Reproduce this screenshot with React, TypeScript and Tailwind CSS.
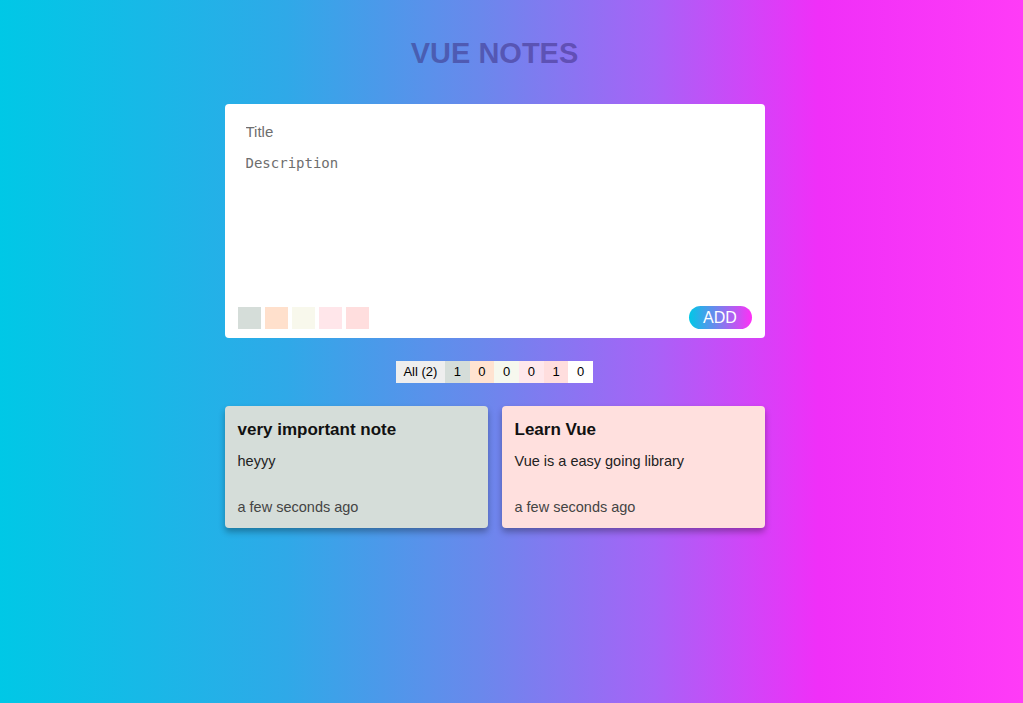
import { useState } from "react";

const colors = ["#d5ddd9", "#ffe0cc", "#f8f8ec", "#ffe6ea", "#ffdede"];

const notes = [
  { title: "very important note", body: "heyyy", color: "#d5ddd9" },
  { title: "Learn Vue", body: "Vue is a easy going library", color: "#ffe0de" },
];

const counts = [
  { label: "1", bg: "bg-[#d5ddd9]" },
  { label: "0", bg: "bg-[#ffe3d1]" },
  { label: "0", bg: "bg-[#f6f8ee]" },
  { label: "0", bg: "bg-[#ffe8ec]" },
  { label: "1", bg: "bg-[#ffdede]" },
  { label: "0", bg: "bg-white" },
];

export default function App() {
  const [title, setTitle] = useState("");
  const [desc, setDesc] = useState("");

  return (
    <main
      className="min-h-[703px] w-full pr-[34px] bg-[linear-gradient(to_right,#00c8e6_0%,#2fa9e8_28%,#6a88ec_47%,#a862f7_64%,#f02ff8_80%,#ff3bf7_100%)] font-['Liberation_Sans',Arial,sans-serif]"
    >
      <h1 className="pt-[35px] text-center text-[29px] font-bold leading-9 text-[#3a2a7a]/50">
        VUE NOTES
      </h1>

      <div className="mx-auto mt-[33px] w-[540px]">
        <div className="flex h-[234px] flex-col rounded bg-white">
          <input
            value={title}
            onChange={(e) => setTitle(e.target.value)}
            placeholder="Title"
            className="mx-[21px] mt-[16px] text-[15px] leading-6 text-gray-800 outline-none placeholder:text-[#6e6e6e]"
          />
          <textarea
            value={desc}
            onChange={(e) => setDesc(e.target.value)}
            placeholder="Description"
            className="mx-[21px] mt-[7px] flex-1 resize-none font-['DejaVu_Sans_Mono',monospace] text-[14px] leading-6 text-gray-800 outline-none placeholder:text-[#6e6e6e]"
          />
          <div className="flex items-center justify-between px-[13px] pb-[9px]">
            <div className="flex gap-1">
              {colors.map((c) => (
                <span key={c} className="h-[22px] w-[23px]" style={{ backgroundColor: c }} />
              ))}
            </div>
            <button className="h-[23px] w-[63px] rounded-full bg-[linear-gradient(to_right,#00c8e6,#ff30f6)] text-[16px] leading-none text-white">
              ADD
            </button>
          </div>
        </div>

        <div className="mt-[23px] flex justify-center">
          <div className="flex h-[22px] text-[13px] leading-[22px] text-black">
            <span className="w-[49px] bg-[#eeeeee] text-center">All (2)</span>
            {counts.map((c, i) => (
              <span key={i} className={`w-[24.7px] text-center ${c.bg}`}>
                {c.label}
              </span>
            ))}
          </div>
        </div>

        <div className="mt-[23px] grid grid-cols-2 gap-[14px]">
          {notes.map((n) => (
            <div
              key={n.title}
              className="flex h-[122px] flex-col rounded px-[13px] pt-[12px] shadow-[0_4px_6px_rgba(0,0,0,0.3)]"
              style={{ backgroundColor: n.color }}
            >
              <h2 className="text-[17px] font-bold leading-6 text-[#111]">{n.title}</h2>
              <p className="mt-[9px] text-[14.5px] leading-5 text-[#222]">{n.body}</p>
              <p className="mt-auto mb-[11px] text-[14.5px] leading-5 text-[#444]">a few seconds ago</p>
            </div>
          ))}
        </div>
      </div>
    </main>
  );
}
